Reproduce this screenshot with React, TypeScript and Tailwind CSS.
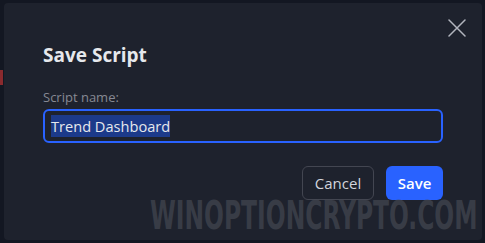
import React from "react";

const CloseIcon = () => (
  <svg width="18" height="18" viewBox="0 0 18 18" fill="none">
    <path d="M1 1L17 17M17 1L1 17" stroke="#b2b5be" strokeWidth="1.5" strokeLinecap="round" />
  </svg>
);

export default function App() {
  return (
    <div
      className="relative h-[243px] w-[485px] overflow-hidden bg-[#131722] pl-[4px] pr-[3px] pt-[3px] pb-[3px]"
      style={{ fontFamily: '"Open Sans", "Noto Sans", sans-serif' }}
    >
      {/* bits of the chart behind */}
      <div className="absolute left-0 top-[70px] h-[15px] w-[3px] bg-[#8a2a2e]" />

      <div className="relative flex h-full w-full flex-col rounded-[4px] bg-[#1e222d] px-[39px] pt-[40px]">
        <button className="absolute right-[16px] top-[16px] flex h-[18px] w-[18px] items-center justify-center">
          <CloseIcon />
        </button>

        <h2 className="text-[19px] font-bold leading-[25px] text-[#e6e8ec]">Save Script</h2>

        <label className="mt-[20px] text-[13px] leading-[18px] text-[#868993]">Script name:</label>
        <div className="mt-[3px] flex h-[34px] w-[400px] items-center rounded-[6px] border-2 border-[#2962ff] px-[6px]">
          <span className="bg-[#1c3a8a] text-[14.6px] leading-[22px] text-[#e6e8ec]">Trend Dashboard</span>
        </div>

        <div className="mt-[23px] flex w-[400px] justify-end gap-[12px]">
          <button className="h-[34px] w-[72px] rounded-[6px] border border-[#434651] text-[15px] text-[#d1d4dc]">
            Cancel
          </button>
          <button className="h-[34px] w-[57px] rounded-[6px] bg-[#2962ff] text-[15px] font-semibold text-white">
            Save
          </button>
        </div>
      </div>

      {/* watermark */}
      <div
        className="pointer-events-none absolute left-[150px] top-[196px] origin-top scale-y-[1.5] whitespace-nowrap text-[26px] font-bold leading-[26px] text-[#4a4e58] opacity-60"
        style={{ fontFamily: '"DejaVu Sans Condensed", "Liberation Sans", sans-serif' }}
      >
        WINOPTIONCRYPTO.COM
      </div>
    </div>
  );
}
